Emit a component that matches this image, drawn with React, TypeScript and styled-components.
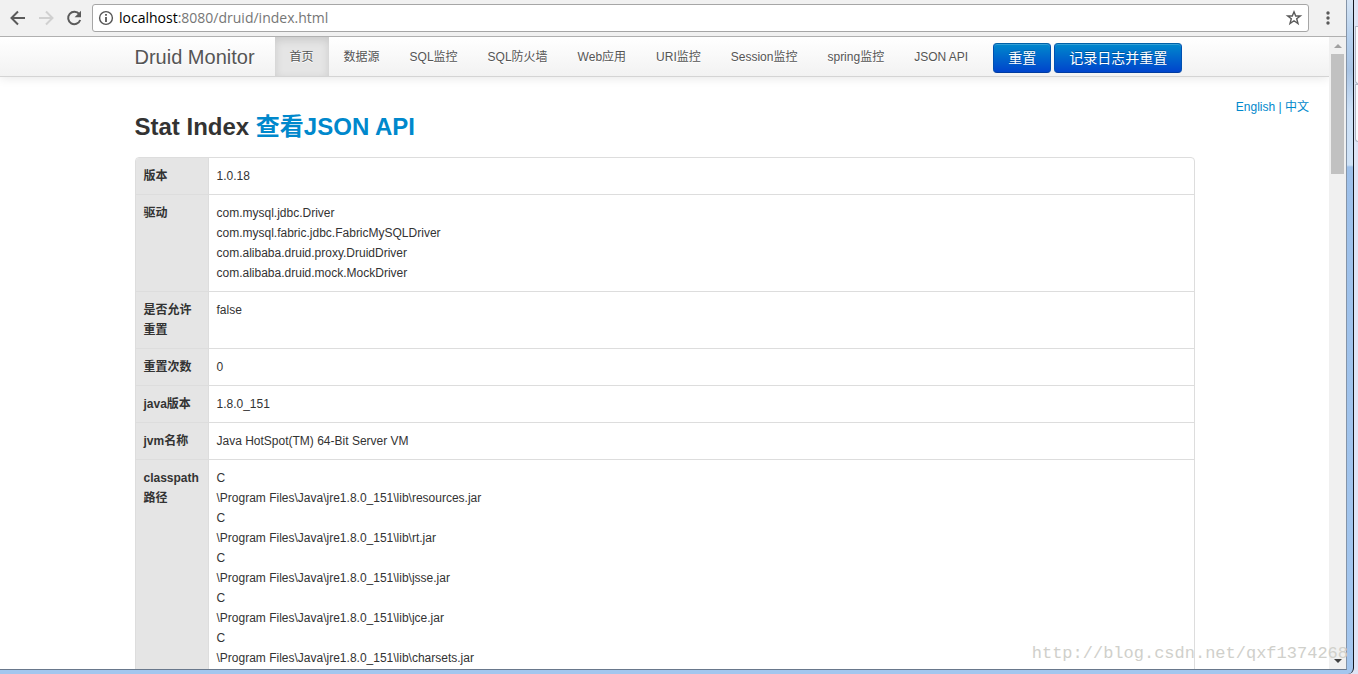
import React from "react";
import styled, { createGlobalStyle, css } from "styled-components";

const Global = createGlobalStyle`
  * { box-sizing: border-box; }
  body {
    margin: 0;
    overflow: hidden;
    font-family: "Liberation Sans", "Noto Sans CJK SC", sans-serif;
    font-size: 12px;
    line-height: 20px;
    color: #333;
  }
`;

const Desktop = styled.div`
  display: flex;
  height: 100vh;
  background: #dfe4f5;
`;

const WindowFrame = styled.div`
  position: relative;
  flex: 1;
  min-width: 0;
  display: flex;
  padding: 0 6px 4px 0;
  border-right: 1px solid #14171f;
  border-radius: 0 0 6px 0;
  background: linear-gradient(#d5e4f4 0, #b4cfed 40px, #a9c4e4 70px, #cbdff5 110px, #cfe2f6 165px, #9dc0ea 167px, #a3c6ee 100%);
`;

const BrowserWindow = styled.div`
  flex: 1;
  min-width: 0;
  display: flex;
  flex-direction: column;
  border-right: 1px solid #8494a8;
  border-bottom: 1px solid #69788c;
  background: #fff;
`;

const Toolbar = styled.header`
  display: flex;
  flex: none;
  align-items: center;
  height: 37px;
  padding: 0 9px 0 8px;
  background: #f1f1f1;
  border-bottom: 1px solid #b0b0b0;
`;

const IconButton = styled.button`
  display: flex;
  flex: none;
  width: 18px;
  height: 18px;
  margin-right: 10px;
  padding: 0;
  border: 0;
  background: none;
  color: #5a5a5a;
  &:disabled { color: #d0d0d0; }
`;

const MenuButton = styled(IconButton)`
  margin: 0 0 0 10px;
`;

const AddressBar = styled.div`
  display: flex;
  flex: 1;
  align-items: center;
  gap: 5px;
  height: 28px;
  padding: 0 5px;
  border: 1px solid #a6a6a6;
  border-radius: 3px;
  background: #fff;
`;

const Url = styled.a`
  flex: 1;
  font-family: "Open Sans", sans-serif;
  font-size: 14px;
  color: #767676;
  text-decoration: none;
`;

const Host = styled.span`
  color: #000;
`;

const StarButton = styled(IconButton)`
  margin: 0;
`;

const Viewport = styled.div`
  display: flex;
  flex: 1;
  min-height: 0;
`;

const Page = styled.div`
  flex: 1;
  min-width: 0;
  overflow: hidden;
`;

const Container = styled.div`
  max-width: 1060px;
  margin: 0 auto;
`;

const Navbar = styled.nav`
  height: 40px;
  border-bottom: 1px solid #d4d4d4;
  background: linear-gradient(#fff, #f2f2f2);
  box-shadow: 0 1px 10px rgba(0, 0, 0, 0.1);
`;

const NavRow = styled(Container)`
  display: flex;
  align-items: flex-start;
`;

const Brand = styled.a`
  padding: 10px 20px 9px 0;
  font-size: 20px;
  color: #555;
  text-decoration: none;
  white-space: nowrap;
  text-shadow: 0 1px 0 #fff;
`;

const NavList = styled.ul`
  display: flex;
  margin: 0 10px 0 0;
  padding: 0;
  list-style: none;
`;

const NavLink = styled.a<{ $active?: boolean }>`
  display: block;
  padding: 10px 15px 9px;
  color: #555;
  text-decoration: none;
  white-space: nowrap;
  text-shadow: 0 1px 0 #fff;
  ${(p) =>
    p.$active &&
    css`
      background: #e5e5e5;
      box-shadow: inset 0 3px 8px rgba(0, 0, 0, 0.125);
    `}
`;

const PrimaryButton = styled.button`
  flex: none;
  height: 30px;
  margin: 6px 3px 0 0;
  padding: 0 14px;
  border: 1px solid;
  border-color: #0061a8 #0050b0 #003ba0;
  border-radius: 4px;
  background: linear-gradient(#08c, #04c);
  box-shadow: inset 0 1px 0 rgba(255, 255, 255, 0.2);
  color: #fff;
  font-family: inherit;
  font-size: 14px;
  line-height: 20px;
  text-shadow: 0 -1px 0 rgba(0, 0, 0, 0.25);
`;

const Languages = styled.div`
  height: 20px;
  margin-top: 20px;
  padding-right: 20px;
  text-align: right;
  color: #08c;
`;

const Link = styled.a`
  color: #08c;
  text-decoration: none;
`;

const Title = styled.h3`
  margin: 0 0 10px;
  font-size: 24px;
  line-height: 40px;
`;

const Main = styled(Container).attrs({ as: "main" })`
  margin-top: -10px;
`;

const StatTable = styled.table`
  width: 100%;
  border: 1px solid #ddd;
  border-radius: 4px;
  border-collapse: separate;
  border-spacing: 0;
  overflow: hidden;
`;

const Row = styled.tr`
  & + & > * { border-top: 1px solid #ddd; }
`;

const Label = styled.th`
  width: 72px;
  padding: 8px;
  background: #e5e5e5;
  text-align: left;
  vertical-align: top;
`;

const Value = styled.td`
  padding: 8px;
  border-left: 1px solid #ddd;
  vertical-align: top;
`;

const Line = styled.div``;

const Scrollbar = styled.div`
  display: flex;
  flex: none;
  flex-direction: column;
  align-items: center;
  width: 17px;
  background: #f0f0f0;
`;

const Arrow = styled.button`
  display: flex;
  flex: none;
  align-items: center;
  justify-content: center;
  width: 17px;
  height: 17px;
  padding: 0;
  border: 0;
  background: none;
  color: #a0a0a0;
`;

const DownArrow = styled(Arrow)`
  color: #404040;
`;

const Thumb = styled.div`
  width: 13px;
  height: 120px;
  background: #c1c1c1;
`;

const Track = styled.div`
  flex: 1;
`;

const SideStrip = styled.aside`
  flex: none;
  display: flex;
  flex-direction: column;
  width: 4px;
  padding: 26px 0 0 1px;
`;

const SideTab = styled.div`
  height: 58px;
  border: 1px solid #b4b9c6;
  border-right: 0;
  border-radius: 0 0 0 3px;
  background: #fafbfe;
`;

const Watermark = styled.div`
  position: absolute;
  right: 5px;
  bottom: 10px;
  font-family: "Liberation Mono", monospace;
  font-size: 17px;
  color: #d0d0cb;
  pointer-events: none;
`;

const NAV = ["首页", "数据源", "SQL监控", "SQL防火墙", "Web应用", "URI监控", "Session监控", "spring监控", "JSON API"];

const LIB = "\\Program Files\\Java\\jre1.8.0_151\\lib\\";

const ROWS: { label: string; lines: string[] }[] = [
  { label: "版本", lines: ["1.0.18"] },
  {
    label: "驱动",
    lines: [
      "com.mysql.jdbc.Driver",
      "com.mysql.fabric.jdbc.FabricMySQLDriver",
      "com.alibaba.druid.proxy.DruidDriver",
      "com.alibaba.druid.mock.MockDriver",
    ],
  },
  { label: "是否允许重置", lines: ["false"] },
  { label: "重置次数", lines: ["0"] },
  { label: "java版本", lines: ["1.8.0_151"] },
  { label: "jvm名称", lines: ["Java HotSpot(TM) 64-Bit Server VM"] },
  {
    label: "classpath路径",
    lines: ["resources", "rt", "jsse", "jce", "charsets"].flatMap((n) => ["C", `${LIB}${n}.jar`]),
  },
];

const stroke = { fill: "none", stroke: "currentColor", strokeWidth: 2 };

export default function App() {
  return (
    <Desktop>
      <Global />
      <WindowFrame>
        <BrowserWindow>
          <Toolbar>
            <IconButton aria-label="Back">
              <svg width="18" height="18" viewBox="0 0 18 18">
                <path d="M17 9H4M10 2.5L3.5 9L10 15.5" {...stroke} />
              </svg>
            </IconButton>
            <IconButton aria-label="Forward" disabled>
              <svg width="18" height="18" viewBox="0 0 18 18">
                <path d="M3 9H16M10 2.5L16.5 9L10 15.5" {...stroke} />
              </svg>
            </IconButton>
            <IconButton aria-label="Reload">
              <svg width="18" height="18" viewBox="0 0 18 18">
                <path d="M15.3 5.2A6.2 6.2 0 1 0 16.2 11" {...stroke} />
                <path d="M17 1.8V8.2H10.6Z" fill="currentColor" />
              </svg>
            </IconButton>
            <AddressBar>
              <svg width="16" height="16" viewBox="0 0 16 16">
                <circle cx="8" cy="8" r="6.4" fill="none" stroke="#555" strokeWidth="1.4" />
                <path d="M8 4V5.8M8 7V12" stroke="#555" strokeWidth="1.8" />
              </svg>
              <Url href="#">
                <Host>localhost</Host>:8080/druid/index.html
              </Url>
              <StarButton aria-label="Bookmark">
                <svg width="18" height="18" viewBox="0 0 18 18">
                  <path
                    d="M9 2.8L10.7 7H15.3L11.7 9.8L13 14.6L9 11.8L5 14.6L6.3 9.8L2.7 7H7.3Z"
                    fill="none"
                    stroke="currentColor"
                    strokeWidth="1.4"
                  />
                </svg>
              </StarButton>
            </AddressBar>
            <MenuButton aria-label="Menu">
              <svg width="18" height="18" viewBox="0 0 18 18" fill="currentColor">
                <circle cx="9" cy="4" r="1.7" />
                <circle cx="9" cy="9" r="1.7" />
                <circle cx="9" cy="14" r="1.7" />
              </svg>
            </MenuButton>
          </Toolbar>
          <Viewport>
            <Page>
              <Navbar>
                <NavRow>
                  <Brand href="#">Druid Monitor</Brand>
                  <NavList>
                    {NAV.map((name, i) => (
                      <li key={name}>
                        <NavLink href="#" $active={i === 0}>
                          {name}
                        </NavLink>
                      </li>
                    ))}
                  </NavList>
                  <PrimaryButton>重置</PrimaryButton>
                  <PrimaryButton>记录日志并重置</PrimaryButton>
                </NavRow>
              </Navbar>
              <Languages>
                <Link href="#">English</Link> | <Link href="#">中文</Link>
              </Languages>
              <Main>
                <Title>
                  Stat Index <Link href="#">查看JSON API</Link>
                </Title>
                <StatTable>
                  <tbody>
                    {ROWS.map((row) => (
                      <Row key={row.label}>
                        <Label scope="row">{row.label}</Label>
                        <Value>
                          {row.lines.map((line, i) => (
                            <Line key={i}>{line}</Line>
                          ))}
                        </Value>
                      </Row>
                    ))}
                  </tbody>
                </StatTable>
              </Main>
            </Page>
            <Scrollbar>
              <Arrow aria-label="Scroll up">
                <svg width="8" height="4" viewBox="0 0 8 4">
                  <path d="M0 4L4 0L8 4Z" fill="currentColor" />
                </svg>
              </Arrow>
              <Thumb />
              <Track />
              <DownArrow aria-label="Scroll down">
                <svg width="8" height="4" viewBox="0 0 8 4">
                  <path d="M0 0L4 4L8 0Z" fill="currentColor" />
                </svg>
              </DownArrow>
            </Scrollbar>
          </Viewport>
        </BrowserWindow>
        <Watermark>http://blog.csdn.net/qxf1374268</Watermark>
      </WindowFrame>
      <SideStrip>
        <SideTab />
        <SideTab />
      </SideStrip>
    </Desktop>
  );
}
